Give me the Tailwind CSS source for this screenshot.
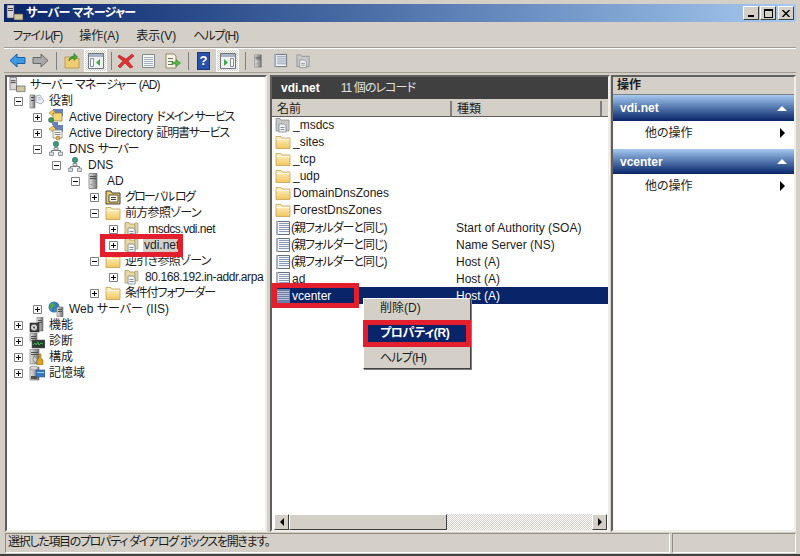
<!DOCTYPE html>
<html lang="ja">
<head>
    <meta charset="UTF-8">
    <title>サーバー マネージャー</title>
    <script src="https://cdn.jsdelivr.net/npm/@tailwindcss/browser@4"></script>
</head>
<body class="bg-[#d4d0c8]">
    <!-- shared icons -->
    <svg class="absolute w-0 h-0">
        <defs>
            <linearGradient id="fld" x1="0" y1="0" x2="0" y2="1"><stop offset="0" stop-color="#fff3c8"/><stop offset="1" stop-color="#f0c860"/></linearGradient>
            <linearGradient id="srv" x1="0" y1="0" x2="1" y2="0"><stop offset="0" stop-color="#e8e8e8"/><stop offset="1" stop-color="#707070"/></linearGradient>
            <symbol id="folder" viewBox="0 0 16 16"><path d="M1 4V2.500h5L7 4h8v10.500H1z" fill="url(#fld)" stroke="#c8a050" stroke-width=".8"/><path d="M1.500 5.500h13" stroke="#fffbe8"/></symbol>
            <symbol id="zone" viewBox="0 0 16 16"><path d="M1 3V1.500h4L6 3h5v11H1z" fill="#e8d8a0" stroke="#a89868" stroke-width=".8"/><path d="M11 2h3v10h-3z" fill="#d8d0b0" stroke="#a89868" stroke-width=".6"/><path d="M4 7h5l2 2v6H4z" fill="#f4f4f4" stroke="#808890" stroke-width=".8"/><path d="M5.500 10.500h4M5.500 12.500h4" stroke="#8090a0"/></symbol>
            <symbol id="zonegray" viewBox="0 0 16 16"><path d="M1 3V1.500h4L6 3h8v11H1z" fill="#c8c8c8" stroke="#8a8a8a" stroke-width=".8"/><path d="M4 7h5l2 2v6H4z" fill="#f4f4f4" stroke="#808890" stroke-width=".8"/><path d="M5.500 10.500h4M5.500 12.500h4" stroke="#8090a0"/></symbol>
            <symbol id="record" viewBox="0 0 16 16"><path d="M2.500 1.500h12v13h-12z" fill="#f4f6f8" stroke="#68707c"/><path d="M1 1h2v14H1z" fill="#a8b0bc"/><path d="M4 3.500h10M4 5.500h10M4 7.500h10M4 9.500h10M4 11.500h10" stroke="#8a9ab4"/></symbol>
            <symbol id="recordsel" viewBox="0 0 16 16"><path d="M1 1h14v14H1z" fill="#6a7ea8"/><path d="M2 3.500h12M2 5.500h12M2 7.500h12M2 9.500h12M2 11.500h12" stroke="#b8c2d8"/></symbol>
            <symbol id="tower" viewBox="0 0 12 16"><path d="M2 .500h8v15H2z" fill="url(#srv)" stroke="#707070" stroke-width=".7"/><path d="M3 3.500h6M3 5.500h6" stroke="#505050"/><path d="M3 11.500h6" stroke="#a0a0a0"/></symbol>
            <symbol id="dns" viewBox="0 0 14 16"><circle cx="7" cy="3" r="2.700" fill="#3a9a7a" stroke="#206050" stroke-width=".5"/><path d="M7 6v3M2.500 11V9.500h9V11" stroke="#808080" fill="none"/><path d="M5 6.500h4v2.500H5zM.500 11h4v3.500h-4zM9.500 11h4v3.500h-4z" fill="#d8dce0" stroke="#707880" stroke-width=".7"/></symbol>
            <symbol id="role" viewBox="0 0 16 16"><path d="M1 2h5v13H1z" fill="url(#srv)" stroke="#707070" stroke-width=".6"/><path d="M2 4.500h3M2 7.500h3" stroke="#505050"/><path d="M7 3l4-1 4 6-3 3-5-2z" fill="#f0f2f8" stroke="#8090a8" stroke-width=".7"/><path d="M8.500 5l3-.5M9 7l3-.5" stroke="#8090a8" stroke-width=".6"/></symbol>
            <symbol id="adicon" viewBox="0 0 16 16"><path d="M5 0h10v7H5z" fill="#6a80b8"/><path d="M1 4l4-3 3 3-3 3z" fill="#f0d060" stroke="#806020" stroke-width=".5"/><path d="M5 4h9v8H5z" fill="#f2d878" stroke="#907030" stroke-width=".7"/><circle cx="3" cy="11" r="2.500" fill="#40a060" stroke="#204030" stroke-width=".5"/><path d="M4 13h6v3H4z" fill="#6a80b8"/></symbol>
            <symbol id="adcert" viewBox="0 0 16 16"><path d="M5 0h10v7H5z" fill="#6a80b8"/><path d="M1 4l4-3 3 3-3 3z" fill="#f0d060" stroke="#806020" stroke-width=".5"/><path d="M5 5h9v8H5z" fill="#f4f4f0" stroke="#808080" stroke-width=".7"/><path d="M6.500 7.500h6M6.500 9.500h6" stroke="#909090"/><circle cx="10" cy="13" r="2" fill="#e8b040" stroke="#806020" stroke-width=".5"/></symbol>
            <symbol id="web" viewBox="0 0 16 16"><circle cx="6" cy="6" r="5.500" fill="#3a78c8"/><path d="M2 4c2-3 5-2 5 0s-3 1-3 4-3 0-2-4zM7 8c2-1 4 0 3 2s-3 1-3-2z" fill="#50a850"/><path d="M9 6h6v10H9z" fill="url(#srv)" stroke="#707070" stroke-width=".6"/><path d="M10 8.500h4M10 10.500h4" stroke="#505050"/></symbol>
            <symbol id="feature" viewBox="0 0 16 16"><path d="M8 0h6v14H8z" fill="url(#srv)" stroke="#707070" stroke-width=".6"/><path d="M9 3.500h4M9 5.500h4" stroke="#505050"/><path d="M1 6h9v9H1z" fill="#404040" stroke="#202020" stroke-width=".6"/><circle cx="5" cy="10.500" r="3" fill="#d0d0d0"/><circle cx="5" cy="10.500" r="1" fill="#505050"/></symbol>
            <symbol id="diag" viewBox="0 0 16 16"><path d="M1 0h7v8H1z" fill="url(#srv)" stroke="#707070" stroke-width=".6"/><path d="M2 3.500h5M2 5.500h5" stroke="#505050"/><path d="M3 7h13v8H3z" fill="#2a3a30" stroke="#606060" stroke-width=".6"/><path d="M4 12l2-2 1 2 2-3 1 3 2-2 2 1" stroke="#50d060" fill="none" stroke-width=".8"/></symbol>
            <symbol id="config" viewBox="0 0 16 16"><path d="M1 0h9v15H1z" fill="url(#srv)" stroke="#707070" stroke-width=".6"/><path d="M2 3.500h7M2 5.500h7" stroke="#505050"/><path d="M10 5l2 0v4l2 2v5H8v-5l2-2z" fill="#e0a020" stroke="#806010" stroke-width=".5"/><path d="M5 7l3 3-1 4-3-3z" fill="#d0d0d0" stroke="#606060" stroke-width=".5"/></symbol>
            <symbol id="storage" viewBox="0 0 16 16"><path d="M1 2h9v13H1z" fill="url(#srv)" stroke="#707070" stroke-width=".6"/><ellipse cx="5" cy="3" rx="4" ry="2" fill="#d8d8d8" stroke="#707070" stroke-width=".5"/><path d="M7 5h9v7H7z" fill="#3878c8" stroke="#305080" stroke-width=".6"/><path d="M8 7.500h7" stroke="#a0d0f0"/><path d="M2 11h6v3H2z" fill="#505050"/></symbol>
            <symbol id="global" viewBox="0 0 16 16"><path d="M1 4V2h5l1 2h8v11H1z" fill="#e8c868" stroke="#303030" stroke-width=".9"/><path d="M4 6h9v7H4z" fill="#f8f8f0" stroke="#303030" stroke-width=".8"/><path d="M6 8.500h5M6 10.500h5" stroke="#404040"/></symbol>
            <symbol id="plus" viewBox="0 0 9 9"><path d="M.500 .500h8v8h-8z" fill="#fff" stroke="#808080"/><path d="M2 4.500h5M4.500 2v5" stroke="#000"/></symbol>
            <symbol id="minus" viewBox="0 0 9 9"><path d="M.500 .500h8v8h-8z" fill="#fff" stroke="#808080"/><path d="M2 4.500h5" stroke="#000"/></symbol>
            <symbol id="paneleft" viewBox="0 0 18 18"><path d="M1.500 1.500h15v15h-15z" fill="#f0f2f4" stroke="#707880"/><path d="M2 2h14v3H2z" fill="#a8b4c4"/><path d="M3.500 6.500h3v8h-3z" fill="#fff" stroke="#8090a0"/><path d="M13 7v7l-4-3.500z" fill="#40a848"/></symbol>
            <symbol id="paneright" viewBox="0 0 18 18"><path d="M1.500 1.500h15v15h-15z" fill="#f0f2f4" stroke="#707880"/><path d="M2 2h14v3H2z" fill="#a8b4c4"/><path d="M11.500 6.500h3v8h-3z" fill="#fff" stroke="#8090a0"/><path d="M5 7v7l4-3.500z" fill="#40a848"/></symbol>
        </defs>
    </svg>

    <div class="relative w-[800px] h-[556px] overflow-hidden bg-[#d4d0c8] border-b-2 border-b-[#404040] pt-1 px-1 flex flex-col text-[12px] leading-4 text-[#1c1c1c] [font-family:'Liberation_Sans','Noto_Sans_CJK_JP',sans-serif] [font-feature-settings:'palt']">
        <!-- title bar -->
        <div class="h-[18px] shrink-0 flex items-center pl-[2px] pr-[2px] bg-gradient-to-r from-[#0a246a] to-[#a6caf0]">
            <svg class="w-[18px] h-[16px]" viewBox="0 0 18 16"><path d="M1 0h7v13H1z" fill="#d8d8d8" stroke="#505050" stroke-width=".6"/><path d="M2 3.500h5M2 5.500h5" stroke="#404040"/><path d="M8 9h9v6H8z" fill="#d0c8a0" stroke="#404040" stroke-width=".6"/></svg>
            <span class="ml-[2px] text-white font-bold text-[12px] tracking-[-0.7px]">サーバー マネージャー</span>
            <div class="ml-auto flex">
                <div class="w-[16px] h-[14px] bg-[#d4d0c8] border border-t-white border-l-white border-r-[#404040] border-b-[#404040] flex items-end justify-center pb-[2px]"><div class="w-[6px] h-[2px] bg-black"></div></div>
                <div class="w-[16px] h-[14px] ml-[1px] bg-[#d4d0c8] border border-t-white border-l-white border-r-[#404040] border-b-[#404040] flex items-center justify-center"><div class="w-[9px] h-[9px] border border-black border-t-2"></div></div>
                <div class="w-[16px] h-[14px] ml-[2px] bg-[#d4d0c8] border border-t-white border-l-white border-r-[#404040] border-b-[#404040] flex items-center justify-center"><svg class="w-[8px] h-[7px]" viewBox="0 0 8 7"><path d="M.500 0l7 7M7.500 0l-7 7" stroke="#000" stroke-width="1.400"/></svg></div>
            </div>
        </div>

        <!-- menu bar -->
        <div class="h-[24px] mt-[2px] shrink-0 flex items-center pl-[9px] gap-[17px] border-b border-b-[#a09c94] text-[12px] text-[#222]">
            <span class="tracking-[-1.1px]">ファイル(F)</span><span>操作(A)</span><span>表示(V)</span><span class="tracking-[-1px]">ヘルプ(H)</span>
        </div>

        <!-- toolbar -->
        <div class="h-[25px] shrink-0 flex items-center pl-[5px] border-t border-t-white border-b border-b-[#a09c94]">
            <svg class="w-[17px] h-[15px]" viewBox="0 0 17 15"><path d="M1 7.500L8 1v3.500h8v6H8V14z" fill="#3c9ae0" stroke="#1c5ca8"/></svg>
            <svg class="w-[17px] h-[15px] ml-[6px]" viewBox="0 0 17 15"><path d="M16 7.500L9 1v3.500H1v6h8V14z" fill="#a8a8a8" stroke="#686868"/></svg>
            <div class="w-px h-[18px] bg-[#808080] ml-[7px]"></div>
            <svg class="w-[16px] h-[17px] ml-[7px]" viewBox="0 0 16 17"><path d="M1 5h5l1 1.500h8V16H1z" fill="#f0cc70" stroke="#b09040" stroke-width=".8"/><path d="M5 9c0-3 2-5 5-5V1.500L13.500 5 10 8.500V6C8 6 6.500 7 5 9z" fill="#4aa838" stroke="#2a6820" stroke-width=".6"/></svg>
            <div class="ml-[4px] w-[23px] h-[23px] border border-white bg-[repeating-conic-gradient(#d4d0c8_0_25%,#ffffff_0_50%)] bg-[length:2px_2px] flex items-center justify-center"><svg class="w-[18px] h-[18px]"><use href="#paneleft"/></svg></div>
            <div class="w-px h-[18px] bg-[#808080] ml-[4px]"></div>
            <svg class="w-[18px] h-[17px] ml-[5px]" viewBox="0 0 18 17"><path d="M2 3l7 4 6-5 2 2-6 5 5 6-3 1-5-5-5 5-2-2 5-5-5-4z" fill="#e03030" stroke="#a02020" stroke-width=".6"/></svg>
            <svg class="w-[15px] h-[16px] ml-[6px]" viewBox="0 0 15 16"><path d="M1.500 1.500h12v13h-12z" fill="#f6f6f0" stroke="#808890"/><path d="M3 4.500h9M3 6.500h9M3 8.500h9M3 10.500h9M3 12.500h9" stroke="#a0b0c0"/></svg>
            <svg class="w-[16px] h-[16px] ml-[9px]" viewBox="0 0 16 16"><path d="M1 1h8l2 2v12H1z" fill="#f6f4e0" stroke="#908870"/><path d="M3 5.500h5M3 8.500h5M3 11.500h5" stroke="#707070"/><path d="M7 9h4V6.500L15.500 10 11 13.500V11H7z" fill="#58b848" stroke="#307828" stroke-width=".5"/></svg>
            <div class="w-px h-[18px] bg-[#808080] ml-[7px]"></div>
            <div class="ml-[8px] w-[13px] h-[18px] bg-[#2850a8] border border-[#183878] text-white text-center font-bold text-[13px] leading-[16px]">?</div>
            <div class="ml-[6px] w-[23px] h-[23px] border border-white bg-[repeating-conic-gradient(#d4d0c8_0_25%,#ffffff_0_50%)] bg-[length:2px_2px] flex items-center justify-center"><svg class="w-[18px] h-[18px]"><use href="#paneright"/></svg></div>
            <div class="w-px h-[18px] bg-[#808080] ml-[6px]"></div>
            <svg class="w-[10px] h-[18px] ml-[7px]" viewBox="0 0 12 16"><use href="#tower"/></svg>
            <svg class="w-[15px] h-[15px] ml-[10px]"><use href="#record"/></svg>
            <svg class="w-[15px] h-[16px] ml-[8px]"><use href="#zonegray"/></svg>
        </div>

        <!-- panes -->
        <div class="flex-1 min-h-0 flex pt-[2px] pb-[1px]">
            <!-- tree -->
            <div class="w-[262px] shrink-0 ml-px bg-white border-2 border-t-[#606060] border-l-[#606060] border-r-[#f0eee8] border-b-[#f0eee8] pl-px">
                <div class="flex items-center h-4 pl-[1px]"><svg class="w-[17px] h-[16px]" viewBox="0 0 18 16"><path d="M1 0h7v13H1z" fill="#d8d8d8" stroke="#505050" stroke-width=".6"/><path d="M2 3.500h5M2 5.500h5" stroke="#404040"/><path d="M8 9h9v6H8z" fill="#d0c8a0" stroke="#404040" stroke-width=".6"/></svg><span class="ml-[4px] tracking-[-0.9px]">サーバー マネージャー (AD)</span></div>
                <div class="flex items-center h-4 pl-[6px]"><svg class="w-[9px] h-[9px]"><use href="#minus"/></svg><svg class="w-[16px] h-[16px] ml-[6px]"><use href="#role"/></svg><span class="ml-[4px]">役割</span></div>
                <div class="flex items-center h-4 pl-[25px]"><svg class="w-[9px] h-[9px]"><use href="#plus"/></svg><svg class="w-[16px] h-[16px] ml-[6px]"><use href="#adicon"/></svg><span class="ml-[5px]">Active Directory <span class="tracking-[-1.3px]">ドメイン サービス</span></span></div>
                <div class="flex items-center h-4 pl-[25px]"><svg class="w-[9px] h-[9px]"><use href="#plus"/></svg><svg class="w-[16px] h-[16px] ml-[6px]"><use href="#adcert"/></svg><span class="ml-[5px]">Active Directory <span class="tracking-[-1.2px]">証明書サービス</span></span></div>
                <div class="flex items-center h-4 pl-[25px]"><svg class="w-[9px] h-[9px]"><use href="#minus"/></svg><svg class="w-[14px] h-[16px] ml-[7px]"><use href="#dns"/></svg><span class="ml-[6px]">DNS <span class="tracking-[-1.5px]">サーバー</span></span></div>
                <div class="flex items-center h-4 pl-[44px]"><svg class="w-[9px] h-[9px]"><use href="#minus"/></svg><svg class="w-[14px] h-[16px] ml-[7px]"><use href="#dns"/></svg><span class="ml-[6px]">DNS</span></div>
                <div class="flex items-center h-4 pl-[63px]"><svg class="w-[9px] h-[9px]"><use href="#minus"/></svg><svg class="w-[12px] h-[16px] ml-[7px]"><use href="#tower"/></svg><span class="ml-[8px]">AD</span></div>
                <div class="flex items-center h-4 pl-[82px]"><svg class="w-[9px] h-[9px]"><use href="#plus"/></svg><svg class="w-[16px] h-[16px] ml-[6px]"><use href="#global"/></svg><span class="ml-[4px] tracking-[-1.7px]">グローバル ログ</span></div>
                <div class="flex items-center h-4 pl-[82px]"><svg class="w-[9px] h-[9px]"><use href="#minus"/></svg><svg class="w-[16px] h-[16px] ml-[6px]"><use href="#folder"/></svg><span class="ml-[4px] tracking-[-0.7px]">前方参照ゾーン</span></div>
                <div class="flex items-center h-4 pl-[101px]"><svg class="w-[9px] h-[9px]"><use href="#plus"/></svg><svg class="w-[16px] h-[16px] ml-[6px]"><use href="#zone"/></svg><span class="ml-[2px] tracking-[-0.5px]">_msdcs.vdi.net</span></div>
                <div class="flex items-center h-4 pl-[101px]"><svg class="w-[9px] h-[9px]"><use href="#plus"/></svg><svg class="w-[16px] h-[16px] ml-[6px]"><use href="#zone"/></svg><span class="ml-[3px] px-[1px] bg-[#d4d0c8]">vdi.net</span></div>
                <div class="flex items-center h-4 pl-[82px]"><svg class="w-[9px] h-[9px]"><use href="#minus"/></svg><svg class="w-[16px] h-[16px] ml-[6px]"><use href="#folder"/></svg><span class="ml-[4px] tracking-[-0.7px]">逆引き参照ゾーン</span></div>
                <div class="flex items-center h-4 pl-[101px]"><svg class="w-[9px] h-[9px]"><use href="#plus"/></svg><svg class="w-[16px] h-[16px] ml-[6px]"><use href="#zone"/></svg><span class="ml-[5px] whitespace-nowrap tracking-[-0.4px]">80.168.192.in-addr.arpa</span></div>
                <div class="flex items-center h-4 pl-[82px]"><svg class="w-[9px] h-[9px]"><use href="#plus"/></svg><svg class="w-[16px] h-[16px] ml-[6px]"><use href="#folder"/></svg><span class="ml-[4px] tracking-[-1.2px]">条件付フォワーダー</span></div>
                <div class="flex items-center h-4 pl-[25px]"><svg class="w-[9px] h-[9px]"><use href="#plus"/></svg><svg class="w-[16px] h-[16px] ml-[6px]"><use href="#web"/></svg><span class="ml-[5px]">Web サーバー (IIS)</span></div>
                <div class="flex items-center h-4 pl-[6px]"><svg class="w-[9px] h-[9px]"><use href="#plus"/></svg><svg class="w-[16px] h-[16px] ml-[6px]"><use href="#feature"/></svg><span class="ml-[4px]">機能</span></div>
                <div class="flex items-center h-4 pl-[6px]"><svg class="w-[9px] h-[9px]"><use href="#plus"/></svg><svg class="w-[16px] h-[16px] ml-[6px]"><use href="#diag"/></svg><span class="ml-[4px]">診断</span></div>
                <div class="flex items-center h-4 pl-[6px]"><svg class="w-[9px] h-[9px]"><use href="#plus"/></svg><svg class="w-[16px] h-[16px] ml-[6px]"><use href="#config"/></svg><span class="ml-[4px]">構成</span></div>
                <div class="flex items-center h-4 pl-[6px]"><svg class="w-[9px] h-[9px]"><use href="#plus"/></svg><svg class="w-[16px] h-[16px] ml-[6px]"><use href="#storage"/></svg><span class="ml-[4px]">記憶域</span></div>
            </div>

            <!-- result list -->
            <div class="w-[340px] shrink-0 ml-[3px] flex flex-col bg-white border-2 border-t-[#606060] border-l-[#606060] border-r-[#f0eee8] border-b-[#f0eee8]">
                <div class="h-[22px] shrink-0 bg-[#404040] text-white flex items-center pl-[9px]"><span class="font-bold">vdi.net</span><span class="ml-[21px] text-[#e0e0e0] tracking-[-0.9px]">11 個のレコード</span></div>
                <div class="h-[2px] shrink-0 bg-[#d4d0c8]"></div>
                <div class="h-[16px] shrink-0 flex bg-[#d4d0c8] border-b border-b-[#606060]">
                    <div class="w-[180px] pl-[5px] border-r-2 border-r-[#808080]">名前</div>
                    <div class="w-[150px] pl-[5px] border-r-2 border-r-[#808080]">種類</div>
                </div>
                <div class="flex-1 min-h-0">
                    <div class="flex items-center h-[17px] pl-[3px] pb-[2px]"><svg class="w-[16px] h-[16px]"><use href="#zonegray"/></svg><span class="ml-[2px]">_msdcs</span></div>
                    <div class="flex items-center h-[17px] pl-[3px] pb-[2px]"><svg class="w-[16px] h-[16px]"><use href="#folder"/></svg><span class="ml-[2px]">_sites</span></div>
                    <div class="flex items-center h-[17px] pl-[3px] pb-[2px]"><svg class="w-[16px] h-[16px]"><use href="#folder"/></svg><span class="ml-[2px]">_tcp</span></div>
                    <div class="flex items-center h-[17px] pl-[3px] pb-[2px]"><svg class="w-[16px] h-[16px]"><use href="#folder"/></svg><span class="ml-[2px]">_udp</span></div>
                    <div class="flex items-center h-[17px] pl-[3px] pb-[2px]"><svg class="w-[16px] h-[16px]"><use href="#folder"/></svg><span class="ml-[2px]">DomainDnsZones</span></div>
                    <div class="flex items-center h-[17px] pl-[3px] pb-[2px]"><svg class="w-[16px] h-[16px]"><use href="#folder"/></svg><span class="ml-[2px]">ForestDnsZones</span></div>
                    <div class="flex items-center h-[17px] pl-[3px]"><svg class="w-[16px] h-[16px]"><use href="#record"/></svg><span class="w-[165px] tracking-[-1px]">(親フォルダーと同じ)</span><span>Start of Authority (SOA)</span></div>
                    <div class="flex items-center h-[17px] pl-[3px]"><svg class="w-[16px] h-[16px]"><use href="#record"/></svg><span class="w-[165px] tracking-[-1px]">(親フォルダーと同じ)</span><span>Name Server (NS)</span></div>
                    <div class="flex items-center h-[17px] pl-[3px]"><svg class="w-[16px] h-[16px]"><use href="#record"/></svg><span class="w-[165px] tracking-[-1px]">(親フォルダーと同じ)</span><span>Host (A)</span></div>
                    <div class="flex items-center h-[17px] pl-[3px]"><svg class="w-[16px] h-[16px]"><use href="#record"/></svg><span class="w-[165px] pl-px">ad</span><span>Host (A)</span></div>
                    <div class="flex items-center h-[17px] pl-[3px] bg-[#0a246a] text-white"><svg class="w-[16px] h-[16px]"><use href="#recordsel"/></svg><span class="w-[165px] pl-px">vcenter</span><span>Host (A)</span></div>
                </div>
                <!-- horizontal scrollbar -->
                <div class="h-[16px] shrink-0 flex ml-[2px] mr-[1px] bg-[repeating-conic-gradient(#d4d0c8_0_25%,#ffffff_0_50%)] bg-[length:2px_2px]">
                    <div class="w-[15px] bg-[#d4d0c8] border border-t-white border-l-white border-r-[#404040] border-b-[#404040] flex items-center justify-center"><div class="w-0 h-0 border-y-[4px] border-y-transparent border-r-[4px] border-r-black"></div></div>
                    <div class="w-[158px] bg-[#d4d0c8] border border-t-white border-l-white border-r-[#404040] border-b-[#404040]"></div>
                    <div class="ml-auto w-[15px] bg-[#d4d0c8] border border-t-white border-l-white border-r-[#404040] border-b-[#404040] flex items-center justify-center"><div class="w-0 h-0 border-y-[4px] border-y-transparent border-l-[4px] border-l-black"></div></div>
                </div>
            </div>

            <!-- actions -->
            <div class="w-[185px] shrink-0 ml-[1px] flex flex-col bg-white border-2 border-t-[#606060] border-l-[#606060] border-r-[#f0eee8] border-b-[#f0eee8]">
                <div class="h-[18px] shrink-0 bg-[#d4d0c8] border-b border-b-[#808080] pl-[4px] font-bold text-[12px]">操作</div>
                <div class="h-[26px] shrink-0 flex items-center justify-between pl-[7px] pr-[7px] bg-gradient-to-b from-[#a6caf0] to-[#0a246a] text-white font-bold"><span>vdi.net</span><div class="w-0 h-0 border-x-[5px] border-x-transparent border-b-[5px] border-b-white"></div></div>
                <div class="h-[28px] shrink-0 flex items-center justify-between pl-[32px] pr-[9px] pb-[5px]"><span>他の操作</span><div class="w-0 h-0 border-y-[5px] border-y-transparent border-l-[5px] border-l-black"></div></div>
                <div class="h-[25px] shrink-0 flex items-center justify-between pl-[7px] pr-[7px] bg-gradient-to-b from-[#a6caf0] to-[#0a246a] text-white font-bold"><span>vcenter</span><div class="w-0 h-0 border-x-[5px] border-x-transparent border-b-[5px] border-b-white"></div></div>
                <div class="h-[24px] shrink-0 flex items-center justify-between pl-[32px] pr-[9px]"><span>他の操作</span><div class="w-0 h-0 border-y-[5px] border-y-transparent border-l-[5px] border-l-black"></div></div>
            </div>
        </div>

        <!-- status bar -->
        <div class="h-[20px] shrink-0 flex mb-px">
            <div class="w-[665px] ml-px pl-[2px] border border-t-[#908c84] border-l-[#908c84] border-r-white border-b-white truncate tracking-[-1.3px]">選択した項目のプロパティ ダイアログ ボックスを開きます。</div>
            <div class="w-[124px] ml-[2px] border border-t-[#908c84] border-l-[#908c84] border-r-white border-b-white"></div>
        </div>

        <!-- context menu -->
        <div class="absolute left-[363px] top-[298px] w-[108px] h-[71px] bg-[#d4d0c8] border border-t-white border-l-white border-r-[#404040] border-b-[#404040] shadow-[1px_1px_0_#808080]">
            <div class="h-[20px] pl-[16px] pt-[1px]">削除(D)</div>
            <div class="h-[17px] mt-[6px] mx-[3px] pl-[13px] bg-[#0a246a] text-white font-bold tracking-[-0.3px]">プロパティ(R)</div>
            <div class="h-[16px] mt-[8px] pl-[16px] tracking-[-0.8px]">ヘルプ(H)</div>
        </div>

        <!-- red callouts -->
        <div class="absolute left-[100px] top-[234px] w-[83px] h-[23px] border-[5px] border-[#e31e2d]"></div>
        <div class="absolute left-[272px] top-[283px] w-[87px] h-[25px] border-[5px] border-[#e31e2d]"></div>
        <div class="absolute left-[363px] top-[320px] w-[108px] h-[27px] border-[5px] border-[#e31e2d]"></div>
    </div>
</body>
</html>
